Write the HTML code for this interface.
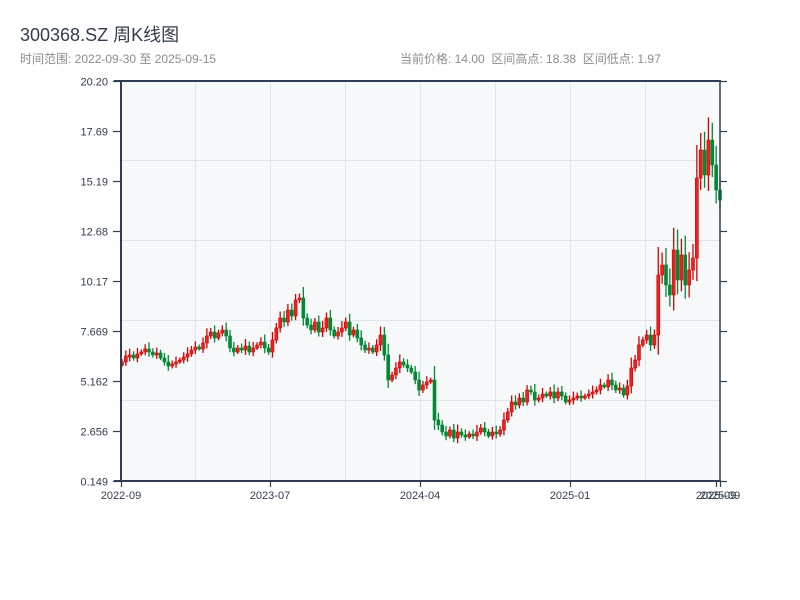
<!DOCTYPE html>
<html><head><meta charset="utf-8"><style>
body{margin:0;background:#fff;width:800px;height:600px;overflow:hidden;font-family:"Liberation Sans","Noto Sans CJK SC",sans-serif}
</style></head><body>
<svg id="s" width="800" height="600" xmlns="http://www.w3.org/2000/svg" style="position:absolute;left:0;top:0">
<text x="20" y="41" font-size="18" fill="#333d4d" font-family="Liberation Sans,Noto Sans CJK SC,sans-serif">300368.SZ 周K线图</text>
<text x="20" y="63" font-size="12" fill="#8c8c8c" font-family="Liberation Sans,Noto Sans CJK SC,sans-serif">时间范围: 2022-09-30 至 2025-09-15</text>
<text x="400" y="63" font-size="12" fill="#8c8c8c" font-family="Liberation Sans,Noto Sans CJK SC,sans-serif" style="white-space:pre">当前价格: 14.00  区间高点: 18.38  区间低点: 1.97</text>
<rect x="121" y="81" width="599" height="400" fill="#f7f8fa"/>
<g stroke="#e1e4ea" stroke-width="1">
<line x1="121" x2="720" y1="160.5" y2="160.5"/><line x1="121" x2="720" y1="240.5" y2="240.5"/><line x1="121" x2="720" y1="320.5" y2="320.5"/><line x1="121" x2="720" y1="400.5" y2="400.5"/>
<line x1="195.5" x2="195.5" y1="81" y2="481"/><line x1="270.5" x2="270.5" y1="81" y2="481"/><line x1="345.5" x2="345.5" y1="81" y2="481"/><line x1="420.5" x2="420.5" y1="81" y2="481"/><line x1="495.5" x2="495.5" y1="81" y2="481"/><line x1="570.5" x2="570.5" y1="81" y2="481"/><line x1="645.5" x2="645.5" y1="81" y2="481"/>
</g>
<g id="c"></g>
<g stroke="#2e3e50" fill="none">
<line x1="114" x2="721" y1="81" y2="81" stroke-width="2"/>
<line x1="121" x2="121" y1="81" y2="482" stroke-width="2"/>
<line x1="720" x2="720" y1="81" y2="482" stroke-width="1.5"/>
<line x1="114" x2="721" y1="481" y2="481" stroke-width="2"/>
</g>
<g id="t" stroke="#2e3e50" stroke-width="1.2"></g>
<g font-size="11" fill="#333d4d" text-anchor="end" id="yl"></g>
<g font-size="11" fill="#333d4d" text-anchor="middle">
<text x="121" y="499">2022-09</text><text x="270" y="499">2023-07</text><text x="420" y="499">2024-04</text><text x="570" y="499">2025-01</text><text x="716" y="499">2025-09</text><text x="720" y="499">2025-09</text>
</g>
</svg>
<script>
(function(){
var ns="http://www.w3.org/2000/svg";
function el(p,n,a){var e=document.createElementNS(ns,n);for(var k in a)e.setAttribute(k,a[k]);p.appendChild(e);return e;}
var t=document.getElementById('t'),yl=document.getElementById('yl');
var labs=["20.20","17.69","15.19","12.68","10.17","7.669","5.162","2.656","0.149"];
for(var i=0;i<9;i++){var y=81+i*50+0.5;el(t,'line',{x1:113,x2:121,y1:y,y2:y});el(t,'line',{x1:720,x2:727,y1:y,y2:y});var tx=el(yl,'text',{x:108,y:y+4});tx.textContent=labs[i];}
[121,270,420,570,716,720].forEach(function(x){el(t,'line',{x1:x+0.5,x2:x+0.5,y1:481,y2:487});});
var c=[362,356,355,358,354,352,349,352,355,353,358,362,366,364,362,360,357,354,350,347,349,343,336,332,338,333,330,336,348,352,348,350,346,352,348,345,342,348,352,340,328,318,322,310,316,300,298,318,325,330,322,332,328,318,330,336,332,328,322,335,330,338,345,350,348,352,345,335,355,380,375,368,362,365,368,372,380,390,385,382,380,420,425,432,436,430,438,432,435,437,434,436,432,428,432,436,432,434,430,420,412,402,405,398,402,390,392,400,398,394,396,392,398,392,396,402,400,398,396,398,396,394,392,390,385,387,380,385,390,388,395,386,368,360,345,340,335,345,335,275,265,285,295,250,280,255,285,270,258,178,150,175,140,165,190,200];
var g=document.getElementById('c');var n=c.length;var dx=598/(n-1);
for(var i=0;i<n;i++){var x=122+i*dx;var o=i?c[i-1]:c[0]+3;var cl=c[i];
var up=cl<o;var bt=Math.min(o,cl),bb=Math.max(o,cl);if(bb-bt<2)bb=bt+2;
var w=2+((i*7)%5)+Math.abs(o-cl)*0.25+(i>138?8:0);
var col=up?'#d40000':'#008a35';
el(g,'line',{x1:x,x2:x,y1:bt-w,y2:bb+w*0.7,stroke:col,'stroke-width':1.3});
el(g,'rect',{x:x-1.5,y:bt,width:3,height:bb-bt,fill:up?'#ee2020':col,stroke:col,'stroke-width':0.6});}
})();
</script>
</body></html>
